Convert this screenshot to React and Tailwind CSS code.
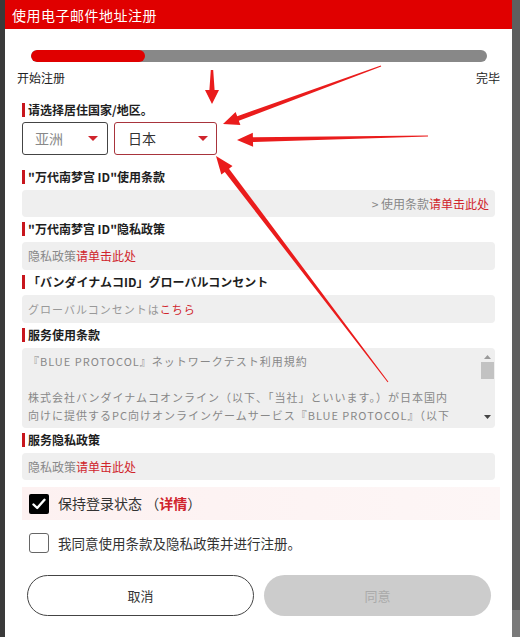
import React from "react";

function arrowPoints(x1, y1, x2, y2, headLen = 16, headW = 7, w0 = 0.6, w1 = 2.2) {
  const dx = x2 - x1, dy = y2 - y1;
  const L = Math.hypot(dx, dy);
  const ux = dx / L, uy = dy / L;
  const nx = -uy, ny = ux;
  const bx = x2 - ux * headLen, by = y2 - uy * headLen;
  const p = [
    [x1 + nx * w0, y1 + ny * w0],
    [bx + nx * w1, by + ny * w1],
    [bx + nx * headW, by + ny * headW],
    [x2, y2],
    [bx - nx * headW, by - ny * headW],
    [bx - nx * w1, by - ny * w1],
    [x1 - nx * w0, y1 - ny * w0],
  ];
  return p.map((q) => q[0].toFixed(1) + "," + q[1].toFixed(1)).join(" ");
}

function Label({ children }) {
  return (
    <div className="flex items-center h-[16px] ml-[17px]">
      <div className="w-[3px] h-[14px] bg-[#c8161d]" />
      <div className="ml-[3px] text-[12px] font-bold text-[#1e1e1e] leading-[16px] whitespace-nowrap">{children}</div>
    </div>
  );
}

function Caret() {
  return (
    <svg width="10" height="6" viewBox="0 0 10 6">
      <polygon points="0,0 10,0 5,5" fill="#d0242c" />
    </svg>
  );
}

export default function App() {
  const font = { fontFamily: '"Noto Sans CJK SC", "Noto Sans", sans-serif' };
  return (
    <div className="relative w-[520px] h-[637px] flex bg-[#3c3c3c] overflow-hidden" style={font}>
      <div className="w-[5px] bg-[#3a3a3a]" />
      <div className="w-[507px] h-full bg-white flex flex-col">
        <div className="h-[29px] bg-[#e00000] flex items-center px-[7px]">
          <span className="text-white text-[14px] leading-none tracking-[0.5px]">使用电子邮件地址注册</span>
        </div>
        <div className="mt-[21px] mx-[26px] mr-[25px] h-[12px] rounded-full bg-[#888888] overflow-hidden">
          <div className="w-[114px] h-full rounded-full bg-[#e00000]" />
        </div>
        <div className="mt-[8px] flex justify-between px-[12px] text-[12px] leading-[16px] text-[#222]">
          <span>开始注册</span>
          <span>完毕</span>
        </div>
        <div className="mt-[16px]">
          <Label>请选择居住国家/地区。</Label>
        </div>
        <div className="mt-[4px] ml-[17px] flex gap-[6px]">
          <div className="w-[86px] h-[33px] rounded-[3px] border border-[#444] flex items-center justify-between pl-[12px] pr-[9px]">
            <span className="text-[14px] text-[#888]">亚洲</span>
            <Caret />
          </div>
          <div className="w-[103px] h-[33px] rounded-[3px] border border-[#a8343c] flex items-center justify-between pl-[13px] pr-[8px]">
            <span className="text-[14px] text-[#333]">日本</span>
            <Caret />
          </div>
        </div>

        <div className="mt-[14px]">
          <Label>"万代南梦宫 ID"使用条款</Label>
        </div>
        <div className="mt-[5px] mx-[17px] h-[27px] rounded-[4px] bg-[#efefef] flex items-center justify-end pr-[6px] text-[12px] text-[#888]">
          <span>&gt; 使用条款</span>
          <span className="text-[#d0242c]">请单击此处</span>
        </div>

        <div className="mt-[4px]">
          <Label>"万代南梦宫 ID"隐私政策</Label>
        </div>
        <div className="mt-[5px] mx-[17px] h-[28px] rounded-[4px] bg-[#efefef] flex items-center pl-[6px] text-[12px] text-[#888]">
          <span>隐私政策</span>
          <span className="text-[#d0242c]">请单击此处</span>
        </div>

        <div className="mt-[4px]">
          <Label>「バンダイナムコID」グローバルコンセント</Label>
        </div>
        <div className="mt-[5px] mx-[17px] h-[28px] rounded-[4px] bg-[#efefef] flex items-center pl-[6px] text-[11px] text-[#999] tracking-[1px]">
          <span>グローバルコンセントは</span>
          <span className="text-[#d0242c]">こちら</span>
        </div>

        <div className="mt-[4px]">
          <Label>服务使用条款</Label>
        </div>
        <div className="mt-[5px] mx-[17px] h-[80px] rounded-[4px] bg-[#efefef] flex overflow-hidden">
          <div className="flex-1 pl-[6px] pt-[4px] text-[11px] leading-[18px] tracking-[1px] text-[#888] whitespace-nowrap overflow-hidden">
            <div>『BLUE PROTOCOL』ネットワークテスト利用規約</div>
            <div>&nbsp;</div>
            <div>株式会社バンダイナムコオンライン（以下、「当社」といいます。）が日本国内</div>
            <div>向けに提供するPC向けオンラインゲームサービス『BLUE PROTOCOL』（以下</div>
          </div>
          <div className="w-[14px] mr-[1px] flex flex-col items-center pt-[7px]">
            <svg width="7" height="4" viewBox="0 0 7 4"><polygon points="3.5,0 7,4 0,4" fill="#9a9a9a" /></svg>
            <div className="mt-[3px] w-[13px] h-[17px] bg-[#c2c2c2]" />
            <div className="flex-1" />
            <svg className="mb-[9px]" width="7" height="4" viewBox="0 0 7 4"><polygon points="0,0 7,0 3.5,4" fill="#444" /></svg>
          </div>
        </div>

        <div className="mt-[4px]">
          <Label>服务隐私政策</Label>
        </div>
        <div className="mt-[5px] mx-[17px] h-[27px] rounded-[4px] bg-[#efefef] flex items-center pl-[6px] text-[12px] text-[#888]">
          <span>隐私政策</span>
          <span className="text-[#d0242c]">请单击此处</span>
        </div>

        <div className="mt-[7px] ml-[17px] mr-[12px] h-[33px] bg-gradient-to-r from-[#fdf1f1] to-[#fdf6f6] flex items-center pl-[7px]">
          <div className="w-[20px] h-[20px] rounded-[2px] bg-black flex items-center justify-center">
            <svg width="14" height="12" viewBox="0 0 14 12">
              <path d="M1.5 6.5 L5.2 10 L12.5 1.8" stroke="white" strokeWidth="2.4" fill="none" strokeLinecap="round" strokeLinejoin="round" />
            </svg>
          </div>
          <span className="ml-[9px] text-[14px] text-[#333]">保持登录状态 （<span className="text-[#d0242c] font-bold">详情</span>）</span>
        </div>

        <div className="mt-[13px] ml-[24px] h-[20px] flex items-center">
          <div className="w-[20px] h-[20px] rounded-[3px] border border-[#666] bg-white" />
          <span className="ml-[9px] text-[13.5px] text-[#333]">我同意使用条款及隐私政策并进行注册。</span>
        </div>

        <div className="mt-[22px] ml-[22px] flex gap-[10px]">
          <div className="w-[227px] h-[41px] rounded-full border border-[#444] flex items-center justify-center text-[13px] text-[#333]">取消</div>
          <div className="w-[227px] h-[41px] rounded-full bg-[#cccccc] flex items-center justify-center text-[13px] text-[#aaa]">同意</div>
        </div>
      </div>
      <div className="w-[8px] flex flex-col">
        <div className="h-[610px] bg-[#5e5e5e]" />
        <div className="flex-1 bg-[#7a7a7a]" />
      </div>

      <svg className="absolute inset-0 pointer-events-none" width="520" height="637" viewBox="0 0 520 637">
        <polygon points={arrowPoints(212, 70, 212, 104, 14, 7, 1.2, 2.6)} fill="#ea1c1c" />
        <polygon points={arrowPoints(381, 66, 223, 124, 16, 7, 0.6, 2.4)} fill="#ea1c1c" />
        <polygon points={arrowPoints(428, 136, 237, 140, 16, 7, 0.6, 2.4)} fill="#ea1c1c" />
        <polygon points={arrowPoints(388, 382, 216, 156, 18, 7, 0.5, 2.6)} fill="#ea1c1c" />
      </svg>
    </div>
  );
}
